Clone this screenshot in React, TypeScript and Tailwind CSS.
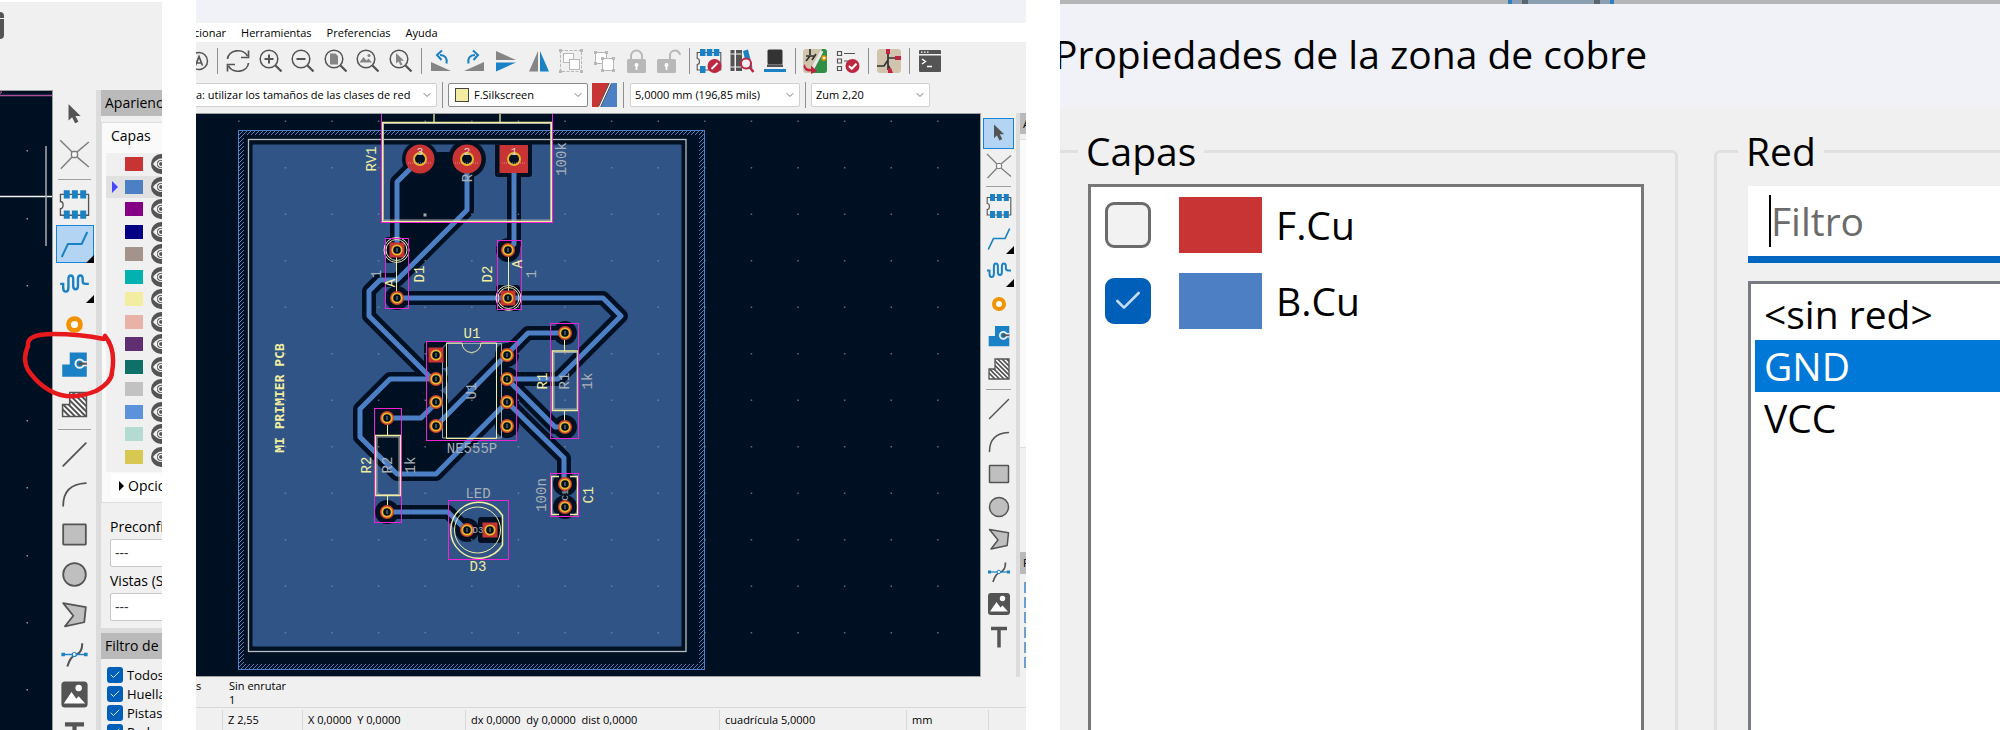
import React from 'react';
import { Check, ChevronDown } from 'lucide-react';

type P = { size?: number };
const G = '#545454';
const B = '#1a81c4';

function Svg({ size = 26, children }: P & { children: React.ReactNode }) {
  return (
    <svg width={size} height={size} viewBox="0 0 26 26" fill="none" aria-hidden="true" className="shrink-0">
      {children}
    </svg>
  );
}

const drawTools: { name: string; art: React.ReactNode; menu?: boolean; sepAfter?: boolean }[] = [
  { name: 'Seleccionar', art: <path d="M8 4.500V18l3-2.600 2.500 5 2.800-1.400-2.500-4.800h4.400z" fill={G} /> },
  {
    name: 'Red local',
    sepAfter: true,
    art: (
      <g stroke="#7d7d7d" strokeWidth="1.200">
        <path d="M1 1l10 10M25 2.500L15 11M1.500 25L11 15M25 23.500L15 15" />
        <rect x="10.500" y="10.500" width="5" height="5" rx="1.500" fill="#fff" />
      </g>
    ),
  },
  {
    name: 'Huella',
    art: (
      <g>
        <path d="M1.200 4.500h23.600v17.500H1.200v-5.500c3 0 3-6 0-6z" stroke={G} strokeWidth="1.100" />
        <path d="M4 1h5v7H4zM10.800 1h5v7h-5zM17.800 1h5v7h-5zM4 18h5v7H4zM10.800 18h5v7h-5zM17.800 18h5v7h-5z" fill={B} />
      </g>
    ),
  },
  { name: 'Enrutar pista', menu: true, art: <path d="M2.300 23.500L7.500 12.500H19L23.700 2.500" stroke={B} strokeWidth="1.700" /> },
  {
    name: 'Ajustar longitud',
    menu: true,
    art: (
      <path
        d="M1 12.500h2.500v3q0 3.500 2.200 3.500t2.200-3.500V8.500q0-3 2-3t2 3V14q0 3 2 3t2-3V8.500q0-3 2-3t2 3v2q0 2 2.500 2H25"
        stroke={B}
        strokeWidth="2"
      />
    ),
  },
  { name: 'Vía', art: <circle cx="13" cy="13" r="5" stroke="#f39200" strokeWidth="4" fill="#fff" /> },
  {
    name: 'Zona rellena',
    art: (
      <g>
        <path d="M2.700 13H9V3h14.300v20.300H2.700z" fill={B} />
        <path d="M23.300 12.300h-5" stroke="#f0f0f0" strokeWidth="4.500" />
        <circle cx="17.300" cy="12.300" r="3.500" stroke="#f0f0f0" strokeWidth="1.700" fill={B} />
        <path d="M23.300 12.300h-5" stroke={G} strokeWidth="1.800" />
        <circle cx="17.800" cy="12.300" r="1.500" fill={G} />
      </g>
    ),
  },
  {
    name: 'Área de reglas',
    sepAfter: true,
    art: (
      <g>
        <defs>
          <clipPath id="rule">
            <path d="M3 13H9V3h14v20H3z" />
          </clipPath>
        </defs>
        <path d="M3 13H9V3h14v20H3z" fill="#fff" stroke={G} strokeWidth="1.300" />
        <path
          clipPath="url(#rule)"
          d="M-11 3l20 20M-6.500 3l20 20M-2 3l20 20M2.500 3l20 20M7 3l20 20M11.500 3l20 20M16 3l20 20M20.500 3l20 20"
          stroke={G}
          strokeWidth="1.700"
        />
      </g>
    ),
  },
  { name: 'Línea', art: <path d="M3.500 22.500l19-19" stroke={G} strokeWidth="1.500" strokeLinecap="round" /> },
  { name: 'Arco', art: <path d="M3.500 22.500q0-18 19-19" stroke={G} strokeWidth="1.500" strokeLinecap="round" /> },
  { name: 'Rectángulo', art: <rect x="3.500" y="4.500" width="19" height="17" rx="0.500" fill="#bfbfbf" stroke={G} strokeWidth="1.500" /> },
  { name: 'Círculo', art: <circle cx="13" cy="13" r="9.500" fill="#bfbfbf" stroke={G} strokeWidth="1.500" /> },
  { name: 'Polígono', art: <path d="M3.500 3.500l19 3.300-1.300 12.700L5 23l7-9z" fill="#bfbfbf" stroke={G} strokeWidth="1.500" strokeLinejoin="round" /> },
  {
    name: 'Curva',
    art: (
      <g>
        <path d="M19.500 3.500q0 8-5 9.500T7 23" stroke={G} strokeWidth="1.700" />
        <path d="M3 13h20" stroke={B} strokeWidth="1.200" />
        <path d="M2 11.500h3v3H2zM21 11.500h3v3h-3z" fill={B} />
        <circle cx="12.800" cy="13" r="1.700" fill="#fff" stroke={B} />
      </g>
    ),
  },
  {
    name: 'Imagen',
    art: (
      <g>
        <rect x="2" y="2" width="22" height="22" rx="3" fill={G} />
        <path d="M4 20.500l6.500-9.500 4 5.500 2-2 5.500 6z" fill="#fff" />
        <circle cx="16.500" cy="7.500" r="2.700" fill="#fff" />
      </g>
    ),
  },
  { name: 'Texto', art: <path d="M5 4.500h16M13 4.500v19" stroke={G} strokeWidth="3.500" /> },
];

function ToolColumn({ active, size, cell, box, sep, column }: { active: number; size: number; cell: string; box: string; sep: string; column: string }) {
  return (
    <div className={`flex flex-col items-center ${column}`}>
      {drawTools.map((t, i) => (
        <React.Fragment key={t.name}>
          <div className={`flex items-center justify-center ${cell}`}>
            <button
              aria-label={t.name}
              className={`relative flex items-center justify-center border ${box} ${
                i === active ? 'border-[#1883d7] bg-[#b3d4f2]' : 'border-transparent'
              }`}
            >
              <Svg size={size}>{t.art}</Svg>
              {t.menu && (
                <svg viewBox="0 0 8 8" className="absolute -right-px -bottom-px size-2" aria-hidden="true">
                  <path d="M8 0v8H0z" fill="#000" />
                </svg>
              )}
            </button>
          </div>
          {t.sepAfter && (
            <div className={`flex w-full shrink-0 items-center px-[5px] ${sep}`}>
              <div className="h-px w-full bg-[#a0a0a0]" />
            </div>
          )}
        </React.Fragment>
      ))}
    </div>
  );
}

/* ---------- Left capture: appearance panel ---------- */

const layers = [
  'bg-[#c83434]',
  'bg-[#4d7fc4]',
  'bg-[#840084]',
  'bg-[#000084]',
  'bg-[#a3938a]',
  'bg-[#02b2b0]',
  'bg-[#f2eda1]',
  'bg-[#e8b2a7]',
  'bg-[#5f2f72]',
  'bg-[#0f7068]',
  'bg-[#c2c2c2]',
  'bg-[#5a93dc]',
  'bg-[#b4dbd2]',
  'bg-[#d8c852]',
];

function Eye() {
  return (
    <svg viewBox="0 0 22 22" className="size-[22px] shrink-0" aria-hidden="true">
      <circle cx="11" cy="11" r="10" fill={G} />
      <path d="M3 11q8-11 16 0q-8 10-16 0z" fill="#f0f0f0" />
      <circle cx="11" cy="11" r="4" fill={G} />
      <path d="M12.500 9a2.500 2.500 0 1 0 0 4" fill="none" stroke="#f0f0f0" strokeWidth="1.300" />
    </svg>
  );
}

function Heading({ children }: { children: React.ReactNode }) {
  return <h2 className="h-[26px] shrink-0 bg-[#bababa] pl-1 text-sm leading-[26px]">{children}</h2>;
}

function FilterBox({ id, label }: { id: string; label: string }) {
  return (
    <div className="flex h-[19px] items-center gap-1">
      <span className="relative flex size-4 shrink-0">
        <input id={id} type="checkbox" defaultChecked className="size-4 appearance-none rounded-[3px] bg-[#005fb8]" />
        <Check className="pointer-events-none absolute inset-0 m-auto size-3 text-[#d5e6f5]" strokeWidth={2} />
      </span>
      <label htmlFor={id} className="text-[13px] leading-4">
        {label}
      </label>
    </div>
  );
}

function AppearanceCapture() {
  return (
    <section className="relative mt-0.5 flex min-w-0 flex-col overflow-hidden bg-[#f0f0f0]">
      <div className="h-[88px] shrink-0 pt-[10px]">
        <div className="flex h-[27px] w-1 flex-col gap-px">
          <div className="h-1.5 rounded-tr bg-[#545454]" />
          <div className="flex-1 rounded-br bg-[#545454]" />
        </div>
      </div>
      <div className="flex min-h-0 flex-1">
        <div className="min-w-0 flex-1 border-t border-r border-[#9c9c9c] bg-[#001023]">
          <svg className="size-full" aria-hidden="true">
            <path d="M0 4.500h53" stroke="#a84f9a" strokeWidth="1.500" />
            <path d="M0 1h2l-2 2" stroke="#a84f9a" fill="none" />
            <path d="M0 105.500h53" stroke="#f4f4f4" strokeWidth="1.500" />
            <path d="M46 55v100" stroke="#a9adb0" strokeWidth="1.500" />
            {[59, 127, 194, 262, 329, 396, 464, 531, 598].map((y) => (
              <rect key={y} x="26.500" y={y} width="1.500" height="1.500" fill="#8f959b" />
            ))}
          </svg>
        </div>
        <ToolColumn active={3} size={31} column="w-[43px] shrink-0 pt-1" cell="h-10 shrink-0" box="size-[38px]" sep="h-2.5" />
        <div className="w-[5px] shrink-0 bg-[#dcdcdc]" />
        <div className="flex w-[61px] shrink-0 flex-col overflow-hidden whitespace-nowrap">
          <Heading>Apariencia</Heading>
          <div className="mt-[6px] flex h-[381px] shrink-0 flex-col border-t border-b border-l border-[#dedede] bg-[#fafafa]">
            <div className="mb-1 pl-[9px] text-sm leading-[26px]">Capas</div>
            <div className="ml-1 flex h-[319px] shrink-0 flex-col bg-[#f0f0f0] pb-1">
              {layers.map((c, i) => (
                <div key={c} className={`flex min-h-0 flex-1 items-center ${i === 1 ? 'bg-[#e1e1e1]' : ''}`}>
                  <svg viewBox="0 0 6 12" className="ml-[6px] h-3 w-1.5 shrink-0" aria-hidden="true">
                    {i === 1 && <path d="M0 0l6 6-6 6z" fill="#4646ff" />}
                  </svg>
                  <div className={`ml-[7px] h-[14px] w-[18px] shrink-0 ${c}`} />
                  <div className="ml-[7px] flex h-full items-center overflow-hidden">
                    <Eye />
                  </div>
                </div>
              ))}
            </div>
            <button className="mt-0.5 ml-[9px] flex h-6 shrink-0 items-center gap-1 bg-white pl-2 text-sm">
              <svg viewBox="0 0 5 10" className="h-2.5 w-[5px] shrink-0" aria-hidden="true">
                <path d="M0 0l5 5-5 5z" />
              </svg>
              Opciones
            </button>
          </div>
          <div className="flex h-[126px] shrink-0 flex-col border-b border-[#dcdcdc] pt-[14px] pl-[9px] text-sm">
            <label htmlFor="presets" className="leading-[20px]">
              Preconfiguraciones
            </label>
            <select id="presets" className="mt-[2px] h-7 w-24 shrink-0 appearance-none rounded-xs border border-[#c8c8c8] bg-white pl-1 text-[#333]">
              <option>---</option>
            </select>
            <label htmlFor="views" className="mt-1 leading-[20px]">
              Vistas (Shift+Tab)
            </label>
            <select id="views" className="mt-[2px] h-7 w-24 shrink-0 appearance-none rounded-xs border border-[#c8c8c8] bg-white pl-1 text-[#333]">
              <option>---</option>
            </select>
          </div>
          <div className="h-1 shrink-0 bg-[#dcdcdc]" />
          <Heading>Filtro de selección</Heading>
          <div className="flex flex-col pt-[6px] pl-[6px]">
            <FilterBox id="f-all" label="Todos" />
            <FilterBox id="f-fp" label="Huellas" />
            <FilterBox id="f-tr" label="Pistas" />
            <FilterBox id="f-pad" label="Pads" />
          </div>
        </div>
      </div>
      <svg className="pointer-events-none absolute top-[325px] left-5 h-[80px] w-[100px]" aria-hidden="true">
        <path
          d="M84 12Q60 7 33 7T8 19Q2 32 8 43Q22 63 41 68Q56 72 76 64Q92 55 92 45Q96 22 85 9"
          fill="none"
          stroke="#e8191d"
          strokeWidth="4.500"
          strokeLinecap="round"
          strokeLinejoin="round"
        />
      </svg>
    </section>
  );
}

/* ---------- Middle capture: board editor ---------- */

const traces = [
  'M420 159L397 182V250',
  'M467 159V210L397 280H380L369 291V316L432 379',
  'M514 159V244L508 250',
  'M397 298H603L621 316L558 379H507',
  'M436 426L528 333H564',
  'M507 379L555 427H564',
  'M507 402L564 458V484',
  'M507 402L436 474H397L360 437V409L390 379H436',
  'M387 418H421L436 403',
  'M387 512H448L466 530',
];

const pads: [number, number, boolean?][] = [
  [397, 250, true],
  [397, 298],
  [508, 250],
  [508, 298, true],
  [436, 355, true],
  [436, 379],
  [436, 402],
  [436, 426],
  [507, 355],
  [507, 379],
  [507, 402],
  [507, 426],
  [565, 333],
  [565, 427],
  [565, 484],
  [565, 507],
  [387, 418],
  [387, 512],
  [467, 530],
  [490, 530, true],
];

const courtyards: [number, number, number, number][] = [
  [381.5, 80, 171, 142.5],
  [385.5, 238.5, 23, 70],
  [497.5, 240.5, 24, 69],
  [426.5, 341.5, 90, 99],
  [550.5, 323.5, 28, 115],
  [374.5, 408.5, 27, 114],
  [550.5, 473.5, 28, 43],
  [448.5, 500.5, 60, 59],
];

const Y = '#f2eda1';
const F = '#a9b1b8';
const marks: [string, number, number, string, boolean?][] = [
  ['RV1', 371, 159, Y, true],
  ['100k', 561, 159, F, true],
  ['R', 467, 178, F, true],
  ['D1', 419, 274, Y, true],
  ['1', 376, 274, F, true],
  ['A', 390, 283, Y, true],
  ['D2', 487, 274, Y, true],
  ['A', 517, 264, Y, true],
  ['1', 531, 274, F, true],
  ['U1', 472, 333, Y],
  ['U1', 471, 391, F, true],
  ['NE555P', 472, 448, F],
  ['R1', 542, 381, Y, true],
  ['R1', 564, 381, F, true],
  ['1k', 587, 381, F, true],
  ['R2', 366, 465, Y, true],
  ['R2', 387, 465, F, true],
  ['1k', 410, 465, F, true],
  ['100n', 541, 495, F, true],
  ['C1', 588, 495, Y, true],
  ['LED', 478, 493, F],
  ['D3', 478, 566, Y],
];

function Board() {
  const cols = Array.from({ length: 17 }, (_, i) => 192 + i * 46.6);
  const rows = Array.from({ length: 12 }, (_, i) => 121 + i * 46.5);
  return (
    <svg className="size-full" role="img" aria-label="Placa de circuito">
      <defs>
        <pattern id="hatch" width="4" height="4" patternUnits="userSpaceOnUse">
          <path d="M-1 3L3 -1M0 6L6 0" stroke="#4d7fc4" />
        </pattern>
      </defs>
      <g transform="translate(-196 -114)">
        <path d="M238 130H705V670H238zM244 135V664H699V135z" fill="url(#hatch)" fillRule="evenodd" />
        <rect x="238.500" y="130.500" width="466" height="539" fill="none" stroke="#4d7fc4" />
        <rect x="248.500" y="139.500" width="437.500" height="512" fill="none" stroke="#b9bec1" strokeWidth="1.300" />
        <rect x="252.500" y="144.500" width="429" height="502" rx="1" fill="#305486" />
        <g fill="none" stroke="#001023" strokeWidth="14" strokeLinejoin="round" strokeLinecap="round">
          {traces.map((d) => (
            <path key={d} d={d} />
          ))}
        </g>
        <g fill="#001023">
          <path d="M397 182L420 152H467V210L397 280z" />
          <path d="M436 379L390 379L360 409V437L397 474H436L507 402V355L436 426z" />
          <circle cx="420" cy="159" r="18" />
          <circle cx="467" cy="159" r="19" />
          <rect x="495" y="141" width="37" height="36" rx="3" />
          {pads.map(([x, y, sq]) =>
            sq ? <rect key={`${x}-${y}`} x={x - 12} y={y - 13} width="24" height="26" rx="3" /> : <circle key={`${x}-${y}`} cx={x} cy={y} r="12" />,
          )}
        </g>
        {cols.map((x) => rows.map((y) => <rect key={`${x}-${y}`} x={x - 0.5} y={y - 0.5} width="1.500" height="1.500" fill="#8a929a" opacity="0.7" />))}
        <rect x="423.500" y="213.500" width="3" height="3" fill="#a0a6aa" />
        <g fill="none" stroke="#4d7fc4" strokeWidth="5" strokeLinejoin="round">
          {traces.map((d) => (
            <path key={d} d={d} />
          ))}
        </g>
        <g fill="none" stroke="#9aa5ae">
          <rect x="383.500" y="123.500" width="167" height="96.500" />
          <path d="M447 343.500H501.500V438H442.500V348z" />
          <path d="M554 352.500H577V409H554zM377 437H399V494.500H377z" />
        </g>
        <g fill="none" stroke={Y}>
          <rect x="382.500" y="122.500" width="169" height="99" strokeWidth="1.500" />
          <path d="M434 80V122M500 80V122" strokeWidth="1.300" />
          <path d="M446.500 343H462A9.500 9.500 0 0 0 481 343H496.500V438.500H446.500z" />
          <path d="M552.500 351H578V410.500H552.500zM375.500 435.500H400.500V495.500H375.500z" strokeWidth="1.500" />
          <path d="M564.500 340V351M564.500 410.500V421M387.500 424V435M387.500 496V505M396.500 256V292M508.500 256V292" />
          <path d="M559 476.500H551.500V514.500H559M570 476.500H577.500V514.500H570" strokeWidth="1.500" />
          <path d="M502.500 515.500A28 28 0 1 0 502.500 545z" strokeWidth="1.500" />
          <circle cx="477.500" cy="530" r="23" />
        </g>
        <g fill="#c83434">
          <circle cx="420" cy="159" r="14.500" />
          <circle cx="467" cy="159" r="14.500" />
          <rect x="499.500" y="145" width="28.500" height="28" />
        </g>
        {[420, 467, 514].map((x) => (
          <g key={x}>
            <circle cx={x} cy="159" r="6" fill="#001023" stroke="#e3b72e" strokeWidth="2" />
            <path d={`M${x - 12} 163h24`} stroke="#e6c4c4" strokeDasharray="1 1" opacity="0.6" />
            <text x={x} y="155" textAnchor="middle" fontSize="11" fontFamily="Liberation Mono, monospace" fill="#e0dede">
              {x === 420 ? '3' : x === 467 ? '2' : '1'}
            </text>
          </g>
        ))}
        {pads.map(([x, y, sq]) => (
          <g key={`${x}-${y}`}>
            {sq ? <rect x={x - 7.500} y={y - 7.500} width="15" height="15" fill="#c83434" /> : <circle cx={x} cy={y} r="7" fill="#d2402f" />}
            <circle cx={x} cy={y} r="4.700" fill="#001023" stroke="#e6b82e" strokeWidth="1.800" />
            <path d={`M${x} ${y - 2}v4`} stroke="#7f8a92" />
          </g>
        ))}
        <g fill="none" stroke="#e8e5b4">
          <circle cx="396.500" cy="250" r="12.500" />
          <circle cx="396.500" cy="250" r="10.500" />
          <circle cx="508.500" cy="298" r="12.500" />
          <circle cx="508.500" cy="298" r="10.500" />
        </g>
        <g fill="none" stroke="#f022d6">
          {courtyards.map(([x, y, w, h]) => (
            <rect key={`${x}-${y}`} x={x} y={y} width={w} height={h} />
          ))}
        </g>
        <g fontFamily="Liberation Mono, monospace" fontSize="14" textAnchor="middle">
          {marks.map(([t, x, y, c, r]) => (
            <text key={`${t}-${x}-${y}`} x={x} y={y + 5} fill={c} transform={r ? `rotate(-90 ${x} ${y})` : undefined}>
              {t}
            </text>
          ))}
          <text x="565" y="498" fill={F} fontSize="9" transform="rotate(-90 565 495)">
            C1
          </text>
          <text x="478" y="533" fill={F} fontSize="9">
            D3
          </text>
          <text
            x="279"
            y="403"
            fill={Y}
            fontWeight="bold"
            fontSize="13"
            fontFamily="DejaVu Sans Mono, monospace"
            transform="rotate(-90 279 398)"
          >
            MI PRIMIER PCB
          </text>
        </g>
      </g>
    </svg>
  );
}

function Lens({ children }: { children: React.ReactNode }) {
  return (
    <g>
      <circle cx="11" cy="11" r="8.800" stroke={G} strokeWidth="1.500" />
      <path d="M17.500 17.500l6 6" stroke={G} strokeWidth="2.300" />
      {children}
    </g>
  );
}

const barGroups: { width: string; items: [string, React.ReactNode][] }[] = [
  {
    width: 'w-[195px]',
    items: [
      [
        'Actualizar',
        <g stroke={G} strokeWidth="1.700">
          <path d="M2.500 11A10.500 9 0 0 1 22.500 8M23.500 15A10.500 9 0 0 1 3.500 18" />
          <path d="M16 9.500h7.500V2.500M10 16.500H2.500v7" />
        </g>,
      ],
      ['Acercar', <Lens><path d="M6.500 11h9M11 6.500v9" stroke={G} strokeWidth="2" /></Lens>],
      ['Alejar', <Lens><path d="M6.500 11h9" stroke={G} strokeWidth="2" /></Lens>],
      ['Ajustar página', <Lens><path d="M7 5.500h5.500l2.500 2.500v8.500H7z" fill="#858585" /></Lens>],
      ['Ajustar objetos', <Lens><path d="M4.500 14.500l4-5.500 3 3.500 2-2 3.500 4z" fill="#858585" /><circle cx="14" cy="7.500" r="1.600" fill="#858585" /></Lens>],
      ['Ajustar selección', <Lens><path d="M8 5v10.500l2.500-2 2 4 2-1-2-3.700h3.500z" fill="#858585" /></Lens>],
    ],
  },
  {
    width: 'w-[260px]',
    items: [
      ['Girar a la izquierda', <g><path d="M3 14v9h20z" fill="#858585" /><path d="M18.500 15.500Q20 7.500 12 7" stroke={B} strokeWidth="2" /><path d="M14 2.500l-5 4.500 4.500 5" stroke={B} strokeWidth="2" /></g>],
      ['Girar a la derecha', <g><path d="M23 14v9H3z" fill="#858585" /><path d="M7.500 15.500Q6 7.500 14 7" stroke={B} strokeWidth="2" /><path d="M12 2.500l5 4.500-4.500 5" stroke={B} strokeWidth="2" /></g>],
      ['Voltear', <g><path d="M3 3v9h20z" fill="#858585" /><path d="M3 23.500v-9h20z" fill={B} /></g>],
      ['Reflejar', <g><path d="M3 23.500h9V3z" fill="#858585" /><path d="M23 23.500h-9V3z" fill={B} /></g>],
      [
        'Agrupar',
        <g stroke="#b8b8b8">
          <rect x="2.500" y="2.500" width="21" height="21" strokeDasharray="3 1.500" />
          <rect x="5.500" y="5.500" width="10" height="9" fill="#fff" />
          <rect x="11.500" y="11.500" width="10" height="10" fill="#fff" />
          <path d="M1 1h3v3H1zM22 1h3v3h-3zM1 22h3v3H1zM22 22h3v3h-3z" fill="#b8b8b8" stroke="none" />
        </g>,
      ],
      [
        'Desagrupar',
        <g stroke="#b8b8b8">
          <rect x="4.500" y="4.500" width="11" height="11" fill="#fff" />
          <rect x="11.500" y="10.500" width="11" height="12" fill="#fff" />
          <path d="M3 3h3v3H3zM14 3h3v3h-3zM3 14h3v3H3zM10 9h3v3h-3zM21 9h3v3h-3zM10 21h3v3h-3zM21 21h3v3h-3z" fill="#b8b8b8" stroke="none" />
        </g>,
      ],
      ['Bloquear', <g><path d="M8 12V8a5.500 5.500 0 0 1 11 0v4" stroke="#b8b8b8" strokeWidth="2" /><rect x="4" y="11" width="19" height="14" rx="1.500" fill="#b8b8b8" /><path d="M13.500 18v4" stroke="#fff" strokeWidth="1.800" /><circle cx="13.500" cy="17" r="2" fill="#fff" /></g>],
      ['Desbloquear', <g><path d="M14 12V8a5 5 0 0 1 10-1" stroke="#b8b8b8" strokeWidth="2" /><rect x="1" y="11" width="19" height="14" rx="1.500" fill="#b8b8b8" /><path d="M10.500 18v4" stroke="#fff" strokeWidth="1.800" /><circle cx="10.500" cy="17" r="2" fill="#fff" /></g>],
    ],
  },
  {
    width: 'w-[98px]',
    items: [
      [
        'Editor de huellas',
        <g>
          <path d="M1.200 4.500h23.600v17.500H1.200v-5.500c3 0 3-6 0-6z" stroke={G} strokeWidth="1.100" />
          <path d="M4 1h5.500v7H4zM10.800 1h5.500v7h-5.500zM17.800 1h5.500v7h-5.500zM4 18h5.500v7H4z" fill={B} />
          <circle cx="18.500" cy="18" r="7" fill="#bf2641" />
          <path d="M15.500 21l6-6" stroke="#fff" strokeWidth="2" />
        </g>,
      ],
      [
        'Explorador de bibliotecas',
        <g>
          <path d="M1.500 2h4v21h-4zM7 2h6v21H7z" fill={G} />
          <path d="M14 3l5-1.500 4.500 18-5 2z" fill={B} />
          <path d="M1.500 6h11M1.500 19h11" stroke="#f0f0f0" />
          <circle cx="17" cy="15.500" r="5" fill="#f0f0f0" stroke="#bf2641" strokeWidth="2" />
          <path d="M20.500 19l4 5" stroke="#bf2641" strokeWidth="2.500" />
        </g>,
      ],
      ['Visor 3D', <g><rect x="5.500" y="1.500" width="15" height="15" rx="1.500" fill="#333" /><path d="M5 16.500h16v2.500H5z" fill={G} /><path d="M2 21h22v3H2z" fill={B} /></g>],
    ],
  },
  {
    width: 'w-[65px]',
    items: [
      [
        'Actualizar placa',
        <g>
          <rect x="1" y="1" width="24" height="24" rx="3" fill="#d1c4ac" />
          <path d="M20 1h2q3 0 3 3v18q0 3-3 3H9z" fill="#2f8f46" />
          <path d="M20 3L9 24" stroke="#e8e8e8" strokeWidth="3" />
          <path d="M8 1v6M4 8h8M8 8l-4 5M10 12l4-6" stroke="#333" strokeWidth="1.700" />
          <circle cx="22" cy="10" r="2" fill="#fff" stroke="#f39200" strokeWidth="1.500" />
          <path d="M3 16q0 5 6 5v-3.500l6 5.500-6 3v-2.500Q2 24 1.500 18z" fill="#bf2641" />
        </g>,
      ],
      [
        'Comprobador de reglas',
        <g stroke={G} strokeWidth="1.200">
          <path d="M2.500 3.500h4v4h-4zM2.500 11h4v4h-4zM2.500 18.500h4v4h-4zM9 5.500h11M9 13h6" />
          <circle cx="17.500" cy="18" r="7" fill="#bf2641" stroke="none" />
          <path d="M14 18l2.700 2.700 4.800-5" stroke="#fff" strokeWidth="2" />
        </g>,
      ],
    ],
  },
  {
    width: 'w-[33px]',
    items: [
      [
        'Editor de esquemas',
        <g>
          <rect x="1" y="1" width="24" height="24" rx="3" fill="#d1c4ac" />
          <path d="M12 6v16M12 10h8M12 12l-4 6H1M12 17l3 6" stroke="#333" strokeWidth="1.700" />
          <path d="M10 1h4v5h-4zM19 8h6v4h-6zM12 20h3l2 5h-5z" fill="#bf2641" />
        </g>,
      ],
    ],
  },
  {
    width: 'w-[33px]',
    items: [
      [
        'Consola',
        <g>
          <path d="M3 2h20q1 0 1 1v3H2V3q0-1 1-1z" fill={G} />
          <path d="M2 7.500h22V23q0 1-1 1H3q-1 0-1-1z" fill={G} />
          <path d="M4 4.200h1.500M7 4.200h1.500M10 4.200h1.500" stroke="#fff" strokeWidth="1.200" />
          <path d="M5 11l3.500 2.500L5 16M10 18.500h5" stroke="#fff" strokeWidth="1.500" />
        </g>,
      ],
    ],
  },
];

function Combo({ label, text, box, pad, swatch }: { label: string; text: string; box: string; pad: string; swatch?: boolean }) {
  return (
    <div className={`relative flex h-6 shrink-0 items-center ${box}`}>
      {swatch && <span className="pointer-events-none absolute left-[7px] size-[14px] border border-[#444] bg-[#f2eda1]" />}
      <select
        aria-label={label}
        className={`h-6 w-full appearance-none rounded-xs border bg-white text-[11px] ${swatch ? 'border-[#8a8a8a]' : 'border-[#d0d0d0]'} ${pad}`}
      >
        <option>{text}</option>
      </select>
      <ChevronDown className="pointer-events-none absolute right-1 size-3 text-[#777]" strokeWidth={2} />
    </div>
  );
}

function Rule({ box }: { box: string }) {
  return (
    <div className={`flex h-[26px] shrink-0 justify-center ${box}`}>
      <div className="w-px bg-[#8f8f8f]" />
    </div>
  );
}

const status = [
  ['w-[27px]', ''],
  ['w-[80px]', 'Z 2,55'],
  ['w-[163px]', 'X 0,0000  Y 0,0000'],
  ['w-[254px]', 'dx 0,0000  dy 0,0000  dist 0,0000'],
  ['w-[187px]', 'cuadrícula 5,0000'],
  ['w-[82px]', 'mm'],
  ['flex-1', ''],
];

function EditorCapture() {
  return (
    <section className="flex min-w-0 flex-col overflow-hidden bg-[#f0f0f0] text-[11px] whitespace-nowrap">
      <div className="h-[23px] shrink-0 bg-[#f0f2f8]" />
      <nav className="-ml-0.5 flex h-[19px] shrink-0 items-center gap-[15px] bg-white">
        {['cionar', 'Herramientas', 'Preferencias', 'Ayuda'].map((m) => (
          <a key={m} href="#" className="leading-4">
            {m}
          </a>
        ))}
      </nav>
      <div className="flex h-[38px] shrink-0 items-center">
        <button aria-label="Buscar" className="-ml-[13px] shrink-0">
          <Svg>
            <circle cx="16" cy="13" r="8.500" stroke={G} strokeWidth="1.500" />
            <path d="M12.500 17.500L16 8.500l3.500 9M13.500 15h5" stroke={G} strokeWidth="1.700" />
          </Svg>
        </button>
        {barGroups.map((g, i) => (
          <React.Fragment key={i}>
            <Rule box={i === 0 ? 'ml-1 w-[9px]' : 'w-2'} />
            <div className={`flex shrink-0 ${g.width}`}>
              {g.items.map(([name, art]) => (
                <button key={name} aria-label={name} className="flex min-w-0 flex-1 justify-center">
                  <Svg>{art}</Svg>
                </button>
              ))}
            </div>
          </React.Fragment>
        ))}
      </div>
      <div className="-ml-[7px] flex h-[33px] shrink-0 items-center pb-[3px]">
        <Combo label="Ancho de pista" text="a: utilizar los tamaños de las clases de red" box="w-[248px]" pad="pl-[6px]" />
        <Rule box="w-[11px]" />
        <Combo label="Capa activa" text="F.Silkscreen" box="w-[140px]" pad="pl-[25px]" swatch />
        <button aria-label="Par de capas" className="ml-1 shrink-0">
          <svg width="25" height="24" aria-hidden="true">
            <path d="M0 0h17L6 24H0z" fill="#c83434" />
            <path d="M20 0h5v24H9z" fill="#4d7fc4" />
            <path d="M18.500 0L7.500 24" stroke="#333" strokeWidth="3" />
            <path d="M18.500 0L7.500 24" stroke="#fff" strokeWidth="1.300" />
          </svg>
        </button>
        <Rule box="w-[13px]" />
        <Combo label="Cuadrícula" text="5,0000 mm (196,85 mils)" box="w-[170px]" pad="pl-1" />
        <Rule box="w-[11px]" />
        <Combo label="Zoom" text="Zum 2,20" box="w-[119px]" pad="pl-1" />
      </div>
      <div className="flex min-h-0 flex-1">
        <div className="min-w-0 flex-1 border-t border-r border-b border-[#a0a0a0] bg-[#001023]">
          <Board />
        </div>
        <ToolColumn active={0} size={26} column="h-[540px] w-[35px] shrink-0 pt-1" cell="min-h-0 flex-1" box="size-[31px]" sep="h-2" />
        <div className="w-1 shrink-0 bg-[#dcdcdc]" />
        <div className="flex w-1.5 shrink-0 flex-col overflow-hidden">
          <div className="h-[21px] bg-[#bababa] pl-[3px] leading-[21px]">A</div>
          <div className="mt-[5px] h-[309px] border-t border-b border-[#dedede] bg-[#fafafa]" />
          <div className="mt-[104px] h-[22px] bg-[#bababa] pl-[3px] leading-[22px]">F</div>
          <div className="flex flex-col items-end gap-1 pt-2">
            {[0, 1, 2, 3, 4, 5].map((i) => (
              <div key={i} className="h-[11px] w-0.5 bg-[#6f9fce]" />
            ))}
          </div>
        </div>
      </div>
      <div className="flex h-[31px] shrink-0 border-b border-[#d8d8d8] pt-0.5">
        <div className="w-[33px] leading-[14px]">s</div>
        <div className="leading-[14px]">
          Sin enrutar
          <br />1
        </div>
      </div>
      <div className="flex h-[22px] shrink-0 pt-0.5">
        {status.map(([w, t], i) => (
          <div key={i} className={`border-[#d8d8d8] pl-[5px] leading-[20px] whitespace-pre ${i < 6 ? 'shrink-0 border-r' : ''} ${w}`}>
            {t}
          </div>
        ))}
      </div>
    </section>
  );
}

/* ---------- Right capture: copper zone dialog ---------- */

function LayerRow({ id, label, swatch, checked }: { id: string; label: string; swatch: string; checked?: boolean }) {
  return (
    <div className="flex h-[76px] items-center">
      <span className="relative flex size-[46px] shrink-0">
        <input
          id={id}
          type="checkbox"
          defaultChecked={checked}
          className="size-[46px] appearance-none rounded-[9px] border-[3px] border-[#6b6b6b] bg-[#f2f2f2] checked:border-[#005fb8] checked:bg-[#005fb8]"
        />
        {checked && <Check className="pointer-events-none absolute inset-0 m-auto size-8 text-[#c5dbef]" strokeWidth={2} />}
      </span>
      <span className={`ml-7 h-14 w-[83px] ${swatch}`} />
      <label htmlFor={id} className="ml-[14px]">
        {label}
      </label>
    </div>
  );
}

function ZoneDialog() {
  return (
    <section className="flex min-w-0 flex-col overflow-hidden bg-[#f0f0f0] text-[39px] whitespace-nowrap">
      <div className="flex h-1 shrink-0 justify-center bg-[#b5b7b7] pl-[62px]">
        <div className="flex h-full w-[106px] justify-between border-x-4 border-[#2f7fc2] bg-[#8b9fb0] px-2.5">
          <div className="h-full w-1.5 bg-[#5c656c]" />
          <div className="h-full w-1.5 bg-[#5c656c]" />
        </div>
      </div>
      <h1 className="-ml-[6px] h-[103px] shrink-0 bg-[#f0f2f8] leading-[100px]">Propiedades de la zona de cobre</h1>
      <div className="flex min-h-0 flex-1 gap-9 pt-[18px]">
        <fieldset className="-mb-2 flex min-w-0 flex-[622_1_0] flex-col rounded-r-md border-[3px] border-l-0 border-[#e0e0e0] pr-[31px] pl-[28px]">
          <legend className="-ml-[10px] px-2 leading-[52px]">Capas</legend>
          <div className="mt-[7px] h-full border-[3px] border-[#777] bg-white pl-[14px]">
            <LayerRow id="fcu" label="F.Cu" swatch="bg-[#c83434]" />
            <LayerRow id="bcu" label="B.Cu" swatch="bg-[#4d7fc4]" checked />
          </div>
        </fieldset>
        <fieldset className="-mb-2 flex min-w-0 flex-[282_1_0] flex-col rounded-l-md border-[3px] border-r-0 border-[#e0e0e0] pl-[31px]">
          <legend className="-ml-[10px] px-2 leading-[52px]">Red</legend>
          <div className="mt-[9px] flex h-[77px] shrink-0 items-center border-b-[7px] border-[#0067c0] bg-white pl-[21px]">
            <span className="h-[52px] w-0.5 shrink-0 bg-black" />
            <input aria-label="Filtro" placeholder="Filtro" className="w-full min-w-0 bg-transparent outline-none placeholder:text-[#6b6b6b]" />
          </div>
          <ul className="mt-[18px] h-full border-[3px] border-r-0 border-[#777b84] bg-white pt-1 pl-1 leading-[52px]">
            <li className="pl-[9px]">&lt;sin red&gt;</li>
            <li className="bg-[#0078d7] pl-[9px] text-white">GND</li>
            <li className="pl-[9px]">VCC</li>
          </ul>
        </fieldset>
      </div>
    </section>
  );
}

export default function App() {
  return (
    <main className="grid h-screen grid-cols-[162fr_830fr_940fr] gap-[34px] overflow-hidden bg-white font-['Open_Sans','Noto_Sans',sans-serif] text-black">
      <AppearanceCapture />
      <EditorCapture />
      <ZoneDialog />
    </main>
  );
}
